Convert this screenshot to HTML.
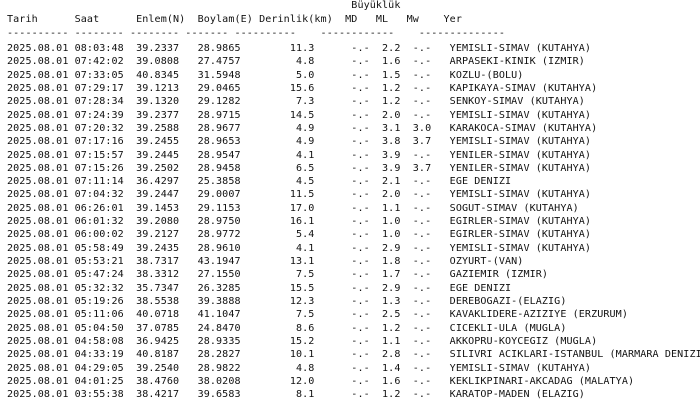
<!DOCTYPE html>
<html><head><meta charset="utf-8"><style>
html,body{margin:0;padding:0;background:#fff;width:700px;height:401px;overflow:hidden}
pre{margin:0;padding:0 0 0 7px;font-family:"DejaVu Sans Mono","Liberation Mono",monospace;font-size:10.07px;letter-spacing:0.09px;color:#111;white-space:pre}
#h{line-height:14px;margin-top:-1px}
#d{line-height:13.32px;margin-top:1px}
</style></head><body><pre id="h">                                                        Büyüklük
Tarih      Saat      Enlem(N)  Boylam(E) Derinlik(km)  MD   ML   Mw    Yer
---------- -------- -------- ------- ----------    ------------    --------------</pre><pre id="d">2025.08.01 08:03:48  39.2337   28.9865        11.3      -.-  2.2  -.-   YEMISLI-SIMAV (KUTAHYA)
2025.08.01 07:42:02  39.0808   27.4757         4.8      -.-  1.6  -.-   ARPASEKI-KINIK (IZMIR)
2025.08.01 07:33:05  40.8345   31.5948         5.0      -.-  1.5  -.-   KOZLU-(BOLU)
2025.08.01 07:29:17  39.1213   29.0465        15.6      -.-  1.2  -.-   KAPIKAYA-SIMAV (KUTAHYA)
2025.08.01 07:28:34  39.1320   29.1282         7.3      -.-  1.2  -.-   SENKOY-SIMAV (KUTAHYA)
2025.08.01 07:24:39  39.2377   28.9715        14.5      -.-  2.0  -.-   YEMISLI-SIMAV (KUTAHYA)
2025.08.01 07:20:32  39.2588   28.9677         4.9      -.-  3.1  3.0   KARAKOCA-SIMAV (KUTAHYA)
2025.08.01 07:17:16  39.2455   28.9653         4.9      -.-  3.8  3.7   YEMISLI-SIMAV (KUTAHYA)
2025.08.01 07:15:57  39.2445   28.9547         4.1      -.-  3.9  -.-   YENILER-SIMAV (KUTAHYA)
2025.08.01 07:15:26  39.2502   28.9458         6.5      -.-  3.9  3.7   YENILER-SIMAV (KUTAHYA)
2025.08.01 07:11:14  36.4297   25.3858         4.5      -.-  2.1  -.-   EGE DENIZI
2025.08.01 07:04:32  39.2447   29.0007        11.5      -.-  2.0  -.-   YEMISLI-SIMAV (KUTAHYA)
2025.08.01 06:26:01  39.1453   29.1153        17.0      -.-  1.1  -.-   SOGUT-SIMAV (KUTAHYA)
2025.08.01 06:01:32  39.2080   28.9750        16.1      -.-  1.0  -.-   EGIRLER-SIMAV (KUTAHYA)
2025.08.01 06:00:02  39.2127   28.9772         5.4      -.-  1.0  -.-   EGIRLER-SIMAV (KUTAHYA)
2025.08.01 05:58:49  39.2435   28.9610         4.1      -.-  2.9  -.-   YEMISLI-SIMAV (KUTAHYA)
2025.08.01 05:53:21  38.7317   43.1947        13.1      -.-  1.8  -.-   OZYURT-(VAN)
2025.08.01 05:47:24  38.3312   27.1550         7.5      -.-  1.7  -.-   GAZIEMIR (IZMIR)
2025.08.01 05:32:32  35.7347   26.3285        15.5      -.-  2.9  -.-   EGE DENIZI
2025.08.01 05:19:26  38.5538   39.3888        12.3      -.-  1.3  -.-   DEREBOGAZI-(ELAZIG)
2025.08.01 05:11:06  40.0718   41.1047         7.5      -.-  2.5  -.-   KAVAKLIDERE-AZIZIYE (ERZURUM)
2025.08.01 05:04:50  37.0785   24.8470         8.6      -.-  1.2  -.-   CICEKLI-ULA (MUGLA)
2025.08.01 04:58:08  36.9425   28.9335        15.2      -.-  1.1  -.-   AKKOPRU-KOYCEGIZ (MUGLA)
2025.08.01 04:33:19  40.8187   28.2827        10.1      -.-  2.8  -.-   SILIVRI ACIKLARI-ISTANBUL (MARMARA DENIZI)
2025.08.01 04:29:05  39.2540   28.9822         4.8      -.-  1.4  -.-   YEMISLI-SIMAV (KUTAHYA)
2025.08.01 04:01:25  38.4760   38.0208        12.0      -.-  1.6  -.-   KEKLIKPINARI-AKCADAG (MALATYA)
2025.08.01 03:55:38  38.4217   39.6583         8.1      -.-  1.2  -.-   KARATOP-MADEN (ELAZIG)
</pre></body></html>
